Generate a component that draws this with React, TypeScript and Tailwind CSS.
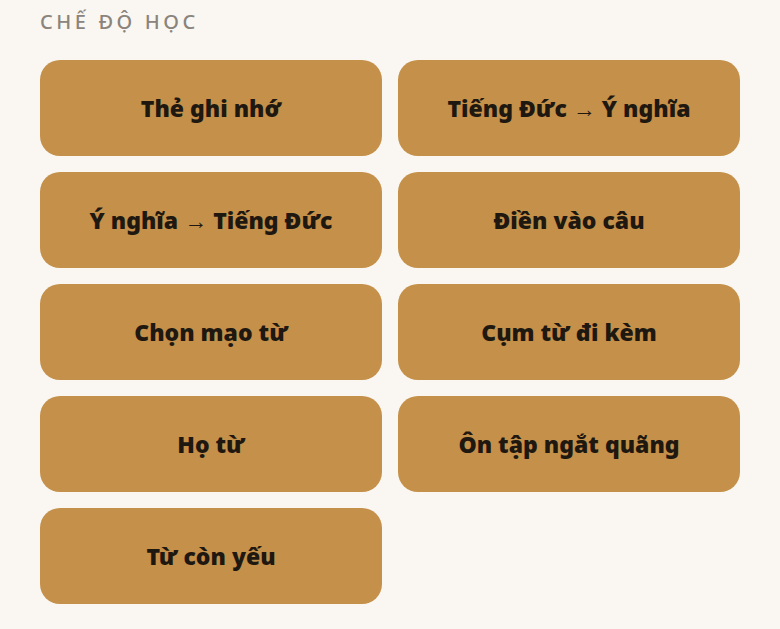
const items = [
  "Thẻ ghi nhớ",
  "Tiếng Đức → Ý nghĩa",
  "Ý nghĩa → Tiếng Đức",
  "Điền vào câu",
  "Chọn mạo từ",
  "Cụm từ đi kèm",
  "Họ từ",
  "Ôn tập ngắt quãng",
  "Từ còn yếu",
];

export default function App() {
  return (
    <div className="min-h-screen bg-[#faf6f1] px-10 pt-[8px] pb-6 font-['Noto_Sans',sans-serif]">
      <h2 className="text-[20px] font-medium tracking-[0.18em] text-[#8a847c] leading-[28px]">
        CHẾ ĐỘ HỌC
      </h2>
      <div className="mt-[24px] grid grid-cols-2 gap-4">
        {items.map((t) => (
          <button
            key={t}
            className="h-[96px] rounded-[20px] bg-[#c4904a] text-[23px] font-black text-[#1e1810] flex items-center justify-center"
          >
            {t}
          </button>
        ))}
      </div>
    </div>
  );
}
